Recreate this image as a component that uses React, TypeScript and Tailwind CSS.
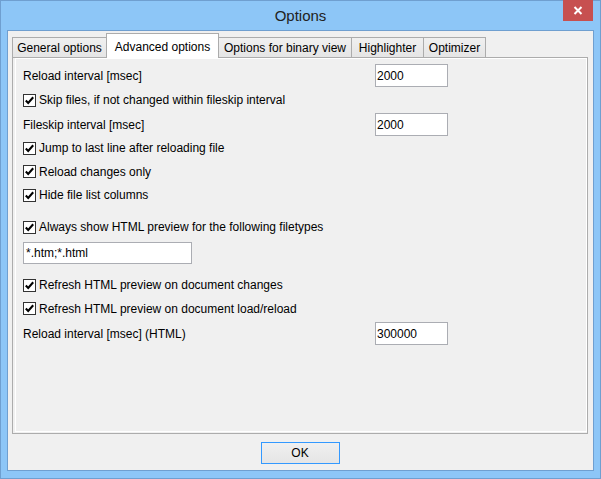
import React from "react";

const FONT = { fontFamily: '"Liberation Sans", Arial, sans-serif' };

function Check({ label }: { label: string }) {
  return (
    <div className="flex items-center">
      <div className="w-[13px] h-[13px] border border-[#333333] bg-white flex items-center justify-center shrink-0">
        <svg width="11" height="11" viewBox="0 0 11 11">
          <path d="M1.8 5.4 L4.2 7.9 L9.2 2.3" fill="none" stroke="#000" strokeWidth="2.1" />
        </svg>
      </div>
      <span className="ml-[3px] text-[12px] text-black whitespace-nowrap">{label}</span>
    </div>
  );
}

function InputRow({ label, value }: { label: string; value: string }) {
  return (
    <div className="flex items-center h-[23px]">
      <span className="w-[352px] text-[12px] text-black whitespace-nowrap">{label}</span>
      <div className="w-[73px] h-[23px] border border-[#abadb3] bg-white flex items-center pl-[1px] text-[12px] text-black">
        {value}
      </div>
    </div>
  );
}

const tabs = [
  { label: "General options", w: "w-[95px]", sel: false },
  { label: "Advanced options", w: "w-[113px]", sel: true },
  { label: "Options for binary view", w: "w-[134px]", sel: false },
  { label: "Highlighter", w: "w-[73px]", sel: false },
  { label: "Optimizer", w: "w-[63px]", sel: false },
];

export default function App() {
  return (
    <div
      className="w-[601px] h-[479px] bg-[#8dc6f7] border border-[#6f9fd0] flex flex-col"
      style={FONT}
    >
      {/* Title bar */}
      <div className="h-[29px] grid grid-cols-[1fr_auto_1fr] items-start">
        <div />
        <div className="h-[29px] flex items-center text-[15px] text-[#222222] pt-[1px]">Options</div>
        <div className="flex justify-end pr-[7px] -mt-px">
          <div className="w-[30px] h-[21px] bg-[#c75050] flex items-center justify-center">
            <svg width="10" height="9" viewBox="0 0 10 9">
              <path d="M1.5 1 L8.5 8 M8.5 1 L1.5 8" stroke="#fff" strokeWidth="2" />
            </svg>
          </div>
        </div>
      </div>

      {/* Client area */}
      <div className="flex-1 mx-[6px] mb-[7px] border border-[#6f9fd0] bg-[#f0f0f0] flex flex-col pt-[2px] pl-[4px] pr-[5px] pb-[6px]">
        {/* Tabs */}
        <div className="h-[24px] flex items-start relative z-10">
          {tabs.map((t, i) =>
            t.sel ? (
              <div
                key={t.label}
                className={`${t.w} h-[25px] -ml-px bg-white border border-b-0 border-[#acacac] flex items-start justify-center pt-[4px] text-[12px] text-black whitespace-nowrap`}
              >
                {t.label}
              </div>
            ) : (
              <div
                key={t.label}
                className={`${t.w} h-[20px] mt-[4px] ${i === 0 ? "" : "-ml-px"} bg-gradient-to-b from-[#f0f0f0] to-[#e5e5e5] border border-b-0 border-[#acacac] flex items-center justify-center text-[12px] text-black whitespace-nowrap`}
              >
                {t.label}
              </div>
            )
          )}
        </div>

        {/* Panel */}
        <div className="h-[377px] border border-[#acacac] pl-[2px] pb-[1px]">
          <div className="h-full border border-white flex flex-col pl-[7px] pt-[5px]">
            <InputRow label="Reload interval [msec]" value="2000" />
            <div className="mt-[1px] h-[24px] flex items-center">
              <Check label="Skip files, if not changed within fileskip interval" />
            </div>
            <div className="mt-[1px]">
              <InputRow label="Fileskip interval [msec]" value="2000" />
            </div>
            <div className="h-[24px] flex items-center">
              <Check label="Jump to last line after reloading file" />
            </div>
            <div className="h-[23px] flex items-center">
              <Check label="Reload changes only" />
            </div>
            <div className="h-[24px] flex items-center">
              <Check label="Hide file list columns" />
            </div>
            <div className="mt-[8px] h-[24px] flex items-center">
              <Check label="Always show HTML preview for the following filetypes" />
            </div>
            <div className="mt-[3px] w-[169px] h-[22px] border border-[#abadb3] bg-white flex items-center pl-[2px] text-[12px] text-black">
              *.htm;*.html
            </div>
            <div className="mt-[9px] h-[24px] flex items-center">
              <Check label="Refresh HTML preview on document changes" />
            </div>
            <div className="h-[23px] flex items-center">
              <Check label="Refresh HTML preview on document load/reload" />
            </div>
            <div className="mt-[2px]">
              <InputRow label="Reload interval [msec] (HTML)" value="300000" />
            </div>
          </div>
        </div>

        {/* OK button */}
        <div className="mt-[8px] flex justify-center">
          <button className="w-[79px] h-[22px] border border-[#3399ff] bg-gradient-to-b from-[#f0f0f0] to-[#e5e5e5] text-[12px] text-black flex items-center justify-center">
            OK
          </button>
        </div>
      </div>
    </div>
  );
}
